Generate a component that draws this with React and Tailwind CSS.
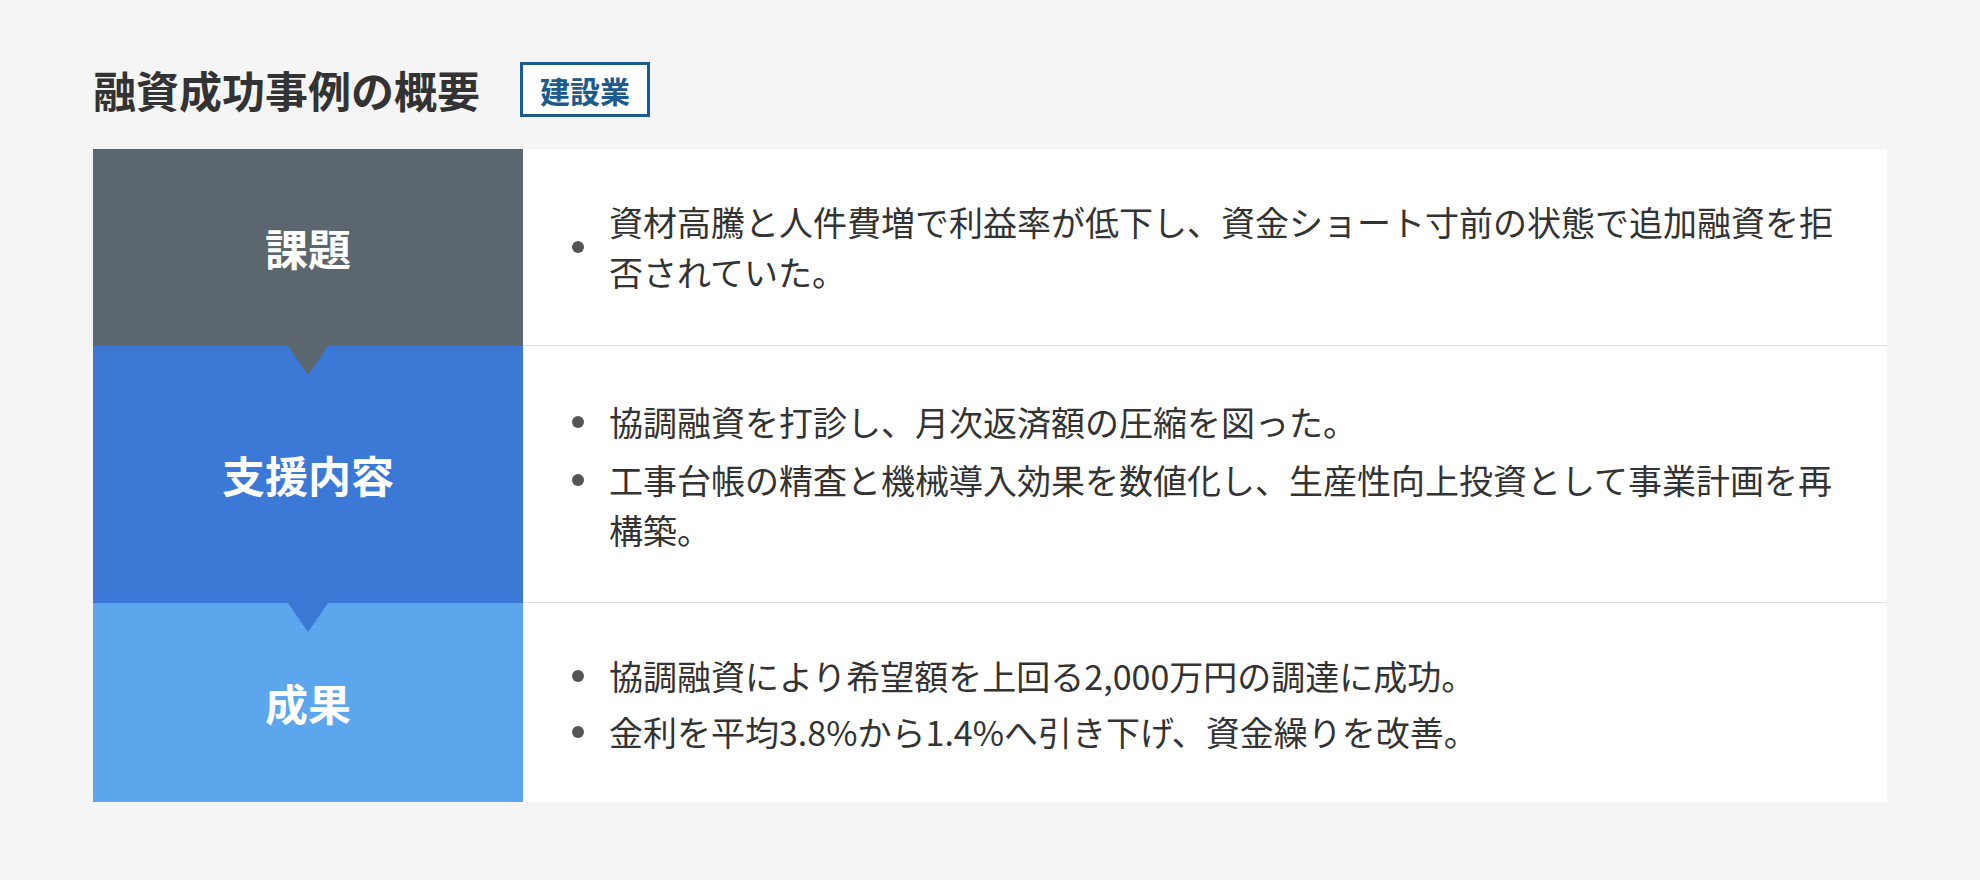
import React from 'react';

const rows = [
  {
    label: '課題',
    bg: 'bg-[#5b666f]',
    arrow: 'border-t-[#5b666f]',
    center: true,
    pad: 'pt-12 pb-12',
    gap: 'gap-[5px]',
    items: ['資材高騰と人件費増で利益率が低下し、資金ショート寸前の状態で追加融資を拒否されていた。'],
  },
  {
    label: '支援内容',
    bg: 'bg-[#3c79d6]',
    arrow: 'border-t-[#3c79d6]',
    pad: 'pt-[51px] pb-[47px]',
    gap: 'gap-[8px]',
    items: [
      '協調融資を打診し、月次返済額の圧縮を図った。',
      '工事台帳の精査と機械導入効果を数値化し、生産性向上投資として事業計画を再構築。',
    ],
  },
  {
    label: '成果',
    bg: 'bg-[#5ca6ed]',
    pad: 'pt-12 pb-[45px]',
    gap: 'gap-[6px]',
    items: [
      '協調融資により希望額を上回る2,000万円の調達に成功。',
      '金利を平均3.8%から1.4%へ引き下げ、資金繰りを改善。',
    ],
  },
];

function Row({ row, last }) {
  return (
    <div className="grid grid-cols-[430px_1fr]">
      <div className={`relative flex items-center justify-center ${row.bg}`}>
        <span className="text-[43px] font-bold text-white leading-none">{row.label}</span>
        {row.arrow && (
          <span
            className={`absolute left-1/2 top-full z-10 -translate-x-1/2 w-0 h-0 border-x-[20px] border-x-transparent border-t-[29px] ${row.arrow}`}
          />
        )}
      </div>
      <div className={`bg-white pl-[49px] pr-[40px] ${row.pad} ${last ? '' : 'border-b border-[#dedede]'}`}>
        <ul className={`flex flex-col ${row.gap}`}>
          {row.items.map(text => (
            <li key={text} className={`flex ${row.center ? 'items-center' : 'items-start'}`}>
              <span
                className={`shrink-0 w-[12px] h-[12px] rounded-full bg-[#555] mr-[25px] ${row.center ? '' : 'mt-[19px]'}`}
              />
              <span className="text-[34px] leading-[50px] text-[#333]">{text}</span>
            </li>
          ))}
        </ul>
      </div>
    </div>
  );
}

export default function App() {
  return (
    <div
      className="min-h-[880px] bg-[#f5f5f5] pl-[93px] pr-[93px] pt-[62px]"
      style={{ fontFamily: '"Noto Sans CJK JP", "Noto Sans", sans-serif' }}
    >
      <div className="flex items-center gap-[40px] h-[55px]">
        <h2 className="text-[43px] font-bold text-[#333] leading-none">融資成功事例の概要</h2>
        <span className="h-[55px] px-[17px] flex items-center border-[3px] border-[#1d5b8d] bg-white text-[30px] font-bold text-[#1d5b8d] leading-none">
          建設業
        </span>
      </div>
      <div className="mt-[32px] w-[1794px]">
        {rows.map((row, i) => (
          <Row key={row.label} row={row} last={i === rows.length - 1} />
        ))}
      </div>
    </div>
  );
}
